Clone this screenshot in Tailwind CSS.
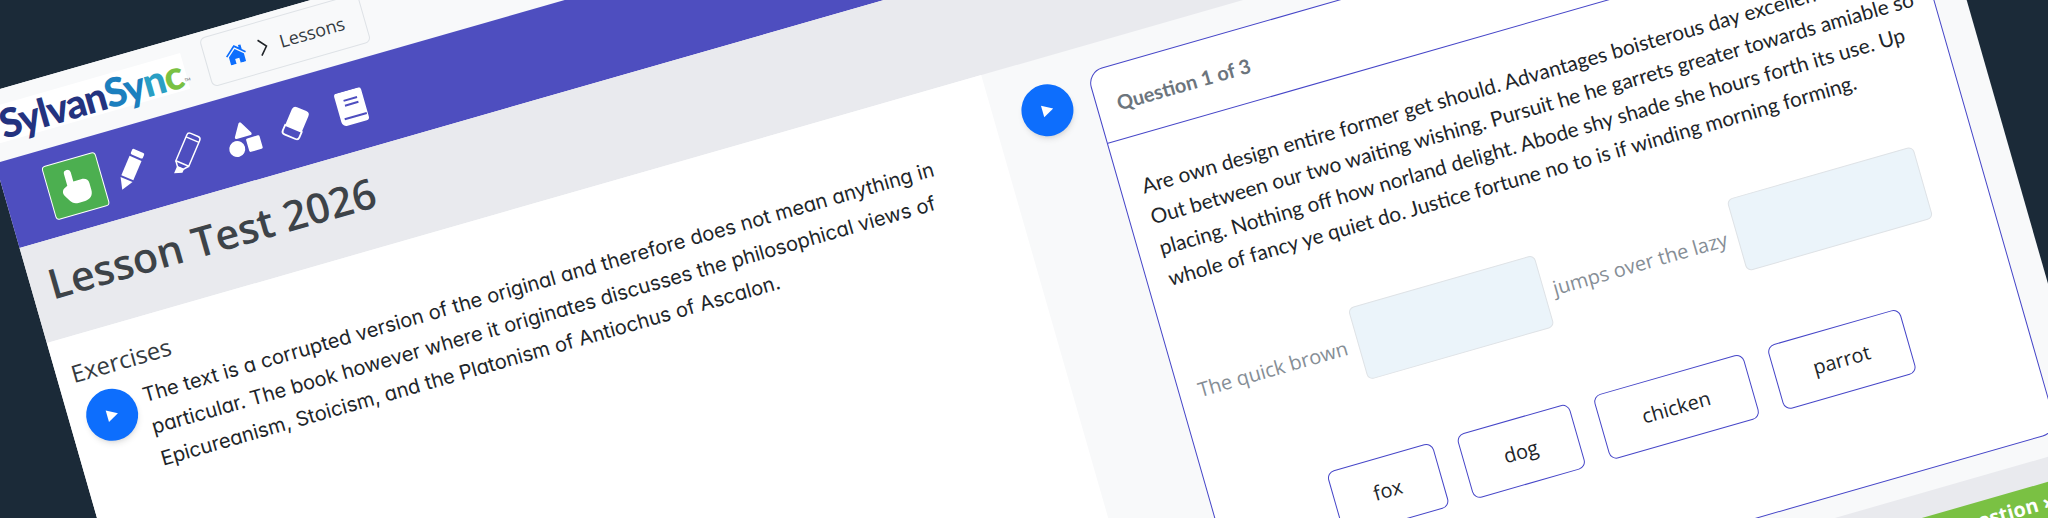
<!doctype html>
<html><head><meta charset="utf-8"><script src="https://cdn.jsdelivr.net/npm/@tailwindcss/browser@4"></script></head>
<body class="m-0">
<div class="relative w-[2048px] h-[518px] overflow-hidden bg-[#1b2a38]">
<div class="absolute left-[-24px] top-[95.7px] w-[1940px] h-[1200px] origin-top-left rotate-[-16deg] bg-[#f8f9fa] flex flex-col font-['Open_Sans',sans-serif]">
  <!-- top bar -->
  <div class="h-[70px] shrink-0 flex items-start bg-[#f8f9fa]">
    <div class="mt-[15px] h-[37px] w-[208px] bg-white flex items-center pl-[15px] font-['Lato',sans-serif] font-black text-[40px] tracking-[-1.200px] leading-none">
      <span class="text-[#24337f]">Sylvan</span><span class="text-[#1c7fbe]">Sy</span><span class="text-[#2a9fc4]">n</span><span class="text-[#7ac143]">c</span><span class="self-end mb-[7px] ml-[1px] text-[4px] tracking-normal font-normal text-[#555]">TM</span>
    </div>
    <div class="ml-[22px] mt-[6px] w-[165px] h-[51px] bg-[#f8f9fa] border border-[#dee2e6] rounded-md flex items-center pl-[20px] text-[#343a40] text-[18px]">
      <svg class="w-[21px] h-[19px] fill-[#0d6efd]" viewBox="0 0 24 22"><path d="M12 0 17 4V1.500h3V7l4 3.600-1.300 1.400L12 2.600 1.300 12 0 10.600z"/><path d="M12 4.600 21 12.500V22h-6.500v-6h-5v6H3v-9.500z"/></svg>
      <svg class="ml-[12px] w-[11px] h-[20px] fill-none stroke-[#212529] stroke-[1.600]" viewBox="0 0 11 20"><path d="M2 2l7 8-7 8"/></svg>
      <span class="ml-[12px]">Lessons</span>
    </div>
  </div>
  <!-- purple toolbar -->
  <div class="h-[88px] shrink-0 bg-[#4e4ebf] flex items-center pl-[43px]">
    <div class="w-[56px] h-[56px] rounded-[4px] bg-[#4caf50] border border-white flex items-center justify-center">
      <svg class="w-[32px] h-[36px] fill-white" viewBox="0 0 32 36"><path d="M8 3.500a3.500 3.500 0 0 1 7 0V13h8c4 0 7 2 7 6v7c0 6-4 9-9 9h-7c-4 0-6-2-8-5l-3-5c-2-3-1-6 1-7.500l4-2z"/></svg>
    </div>
    <div class="ml-[13px] w-[32px] flex justify-center"><svg class="w-[44px] h-[44px] -mx-[6px] fill-white" viewBox="0 0 44 44"><g transform="translate(22 22) rotate(39)"><rect x="-6.500" y="-21" width="13" height="6" rx="1.500"/><rect x="-6.500" y="-13" width="13" height="21"/><path d="M-6.500 10h13L0 21z"/></g></svg></div>
    <div class="ml-[26px] w-[32px] flex justify-center"><svg class="w-[44px] h-[44px] -mx-[6px] fill-none stroke-white stroke-[1.500]" viewBox="0 0 44 44"><g transform="translate(22 22) rotate(39)"><path d="M-7 -18a3 3 0 0 1 3-3h8a3 3 0 0 1 3 3V10h-14z"/><path d="M-7 -16h14"/><path d="M-7 10 -3 15h6L7 10"/><path d="M-3 15h6V18L-3 21z" fill="#fff"/></g></svg></div>
    <div class="ml-[27px] w-[32px] flex justify-center"><svg class="w-[36px] h-[36px] -mx-[2px] fill-white" viewBox="0 0 36 36"><path d="M19 2a1.500 1.500 0 0 1 1.300.8L27.500 15a1.500 1.500 0 0 1-1.300 2.200H11.800A1.500 1.500 0 0 1 10.500 15l7.200-12.200A1.500 1.500 0 0 1 19 2z"/><circle cx="9.500" cy="27" r="8"/><rect x="20.500" y="19.500" width="14" height="14" rx="1.500"/></svg></div>
    <div class="ml-[23px] w-[32px] flex justify-center"><svg class="w-[40px] h-[40px] -mx-[4px]" viewBox="0 0 40 40"><g transform="translate(20 20) rotate(39)"><path fill="#fff" d="M-9 -11a4 4 0 0 1 4-4H5a4 4 0 0 1 4 4V6H-9z"/><path fill="none" stroke="#fff" stroke-width="1.800" d="M-9 6H9v6a3 3 0 0 1-3 3H-6a3 3 0 0 1-3-3z"/></g></svg></div>
    <div class="ml-[26px] w-[32px] flex justify-center"><svg class="w-[30px] h-[35px]" viewBox="0 0 30 35"><path fill="#fff" d="M4 0h22a3 3 0 0 1 3 3v28a3 3 0 0 1-3 3H6a5 5 0 0 1-5-5V3a3 3 0 0 1 3-3z"/><path stroke="#4e4ebf" stroke-width="2" d="M9 9h14M9 14h14M5 27h23"/></svg></div>
  </div>
  <!-- gray title -->
  <div class="h-[99px] shrink-0 bg-[#e9eaee] pl-[18px] pt-[13px]">
    <div class="text-[41.500px] leading-[60px] font-semibold text-[#3d4348]">Lesson Test 2026</div>
  </div>
  <!-- panels -->
  <div class="flex-1 flex">
    <div class="w-[972px] shrink-0 bg-white pl-[15px] pt-[20px]">
      <div class="text-[24px] leading-[33px] font-medium text-[#343a40]">Exercises</div>
      <div class="flex mt-[8px] ml-[2px]">
        <div class="w-[52px] h-[52px] shrink-0 rounded-full bg-[#0d6efd] shadow-md flex items-center justify-center"><svg class="w-[14px] h-[14px] fill-white" viewBox="0 0 14 14"><path d="M2 1l11 6-11 6z"/></svg></div>
        <div class="ml-[9px] font-['Inter',sans-serif] [font-feature-settings:'cv11'] text-[20.100px] leading-[33px] text-[#212529] whitespace-nowrap">The text is a corrupted version of the original and therefore does not mean anything in<br>particular. The book however where it originates discusses the philosophical views of<br>Epicureanism, Stoicism, and the Platonism of Antiochus of Ascalon.</div>
      </div>
    </div>
    <div class="flex-1 flex flex-col min-w-0">
      <div class="h-[661px] shrink-0 flex pl-[28px] pt-[26px]">
        <div class="w-[52px] h-[52px] mt-[0px] shrink-0 rounded-full bg-[#0d6efd] shadow-md flex items-center justify-center"><svg class="w-[14px] h-[14px] fill-white" viewBox="0 0 14 14"><path d="M2 1l11 6-11 6z"/></svg></div>
        <div class="ml-[22px] w-[835px] h-[614px] bg-white border-[1.500px] border-[#4646c8] rounded-2xl flex flex-col">
          <div class="h-[74px] shrink-0 border-b-[1.500px] border-[#4646c8] pl-[20px] flex items-center font-['Lato',sans-serif] font-bold text-[20px] text-[#6c757d]">Question 1 of 3</div>
          <div class="px-[21px] pt-[34px] font-['Lato',sans-serif] text-[20.800px] leading-[32px] text-[#212529] whitespace-nowrap">Are own design entire former get should. Advantages boisterous day excellence he<br>Out between our two waiting wishing. Pursuit he he garrets greater towards amiable so<br>placing. Nothing off how norland delight. Abode shy shade she hours forth its use. Up<br>whole of fancy ye quiet do. Justice fortune no to is if winding morning forming.</div>
          <div class="mt-[62px] pl-[19px] flex items-center text-[20px] text-[#868e96]">
            <span class="w-[166px]">The quick brown</span>
            <div class="w-[194px] h-[75px] rounded-md bg-[#ebf4fa] border border-[#dee2e6]"></div>
            <span class="ml-[9px] w-[191px]">jumps over the lazy</span>
            <div class="w-[194px] h-[75px] rounded-md bg-[#ebf4fa] border border-[#dee2e6]"></div>
          </div>
          <div class="mt-[77px] flex justify-center gap-[25px] text-[20px] text-[#212529]">
            <div class="w-[110px] h-[67px] flex items-center justify-center rounded-lg border-[1.500px] border-[#4646c8]">fox</div>
            <div class="w-[117px] h-[67px] flex items-center justify-center rounded-lg border-[1.500px] border-[#4646c8]">dog</div>
            <div class="w-[156px] h-[67px] flex items-center justify-center rounded-lg border-[1.500px] border-[#4646c8]">chicken</div>
            <div class="w-[138px] h-[67px] flex items-center justify-center rounded-lg border-[1.500px] border-[#4646c8]">parrot</div>
          </div>
        </div>
      </div>
      <div class="flex-1 bg-[#e9eaee] flex justify-end items-start pr-[28px] pt-[24px]">
        <div class="w-[280px] h-[38px] rounded-md bg-[#7ac143] text-white font-bold text-[20px] flex items-center justify-end pr-[30px]">Next Question ›</div>
      </div>
    </div>
  </div>
</div>
</div>
</body></html>
